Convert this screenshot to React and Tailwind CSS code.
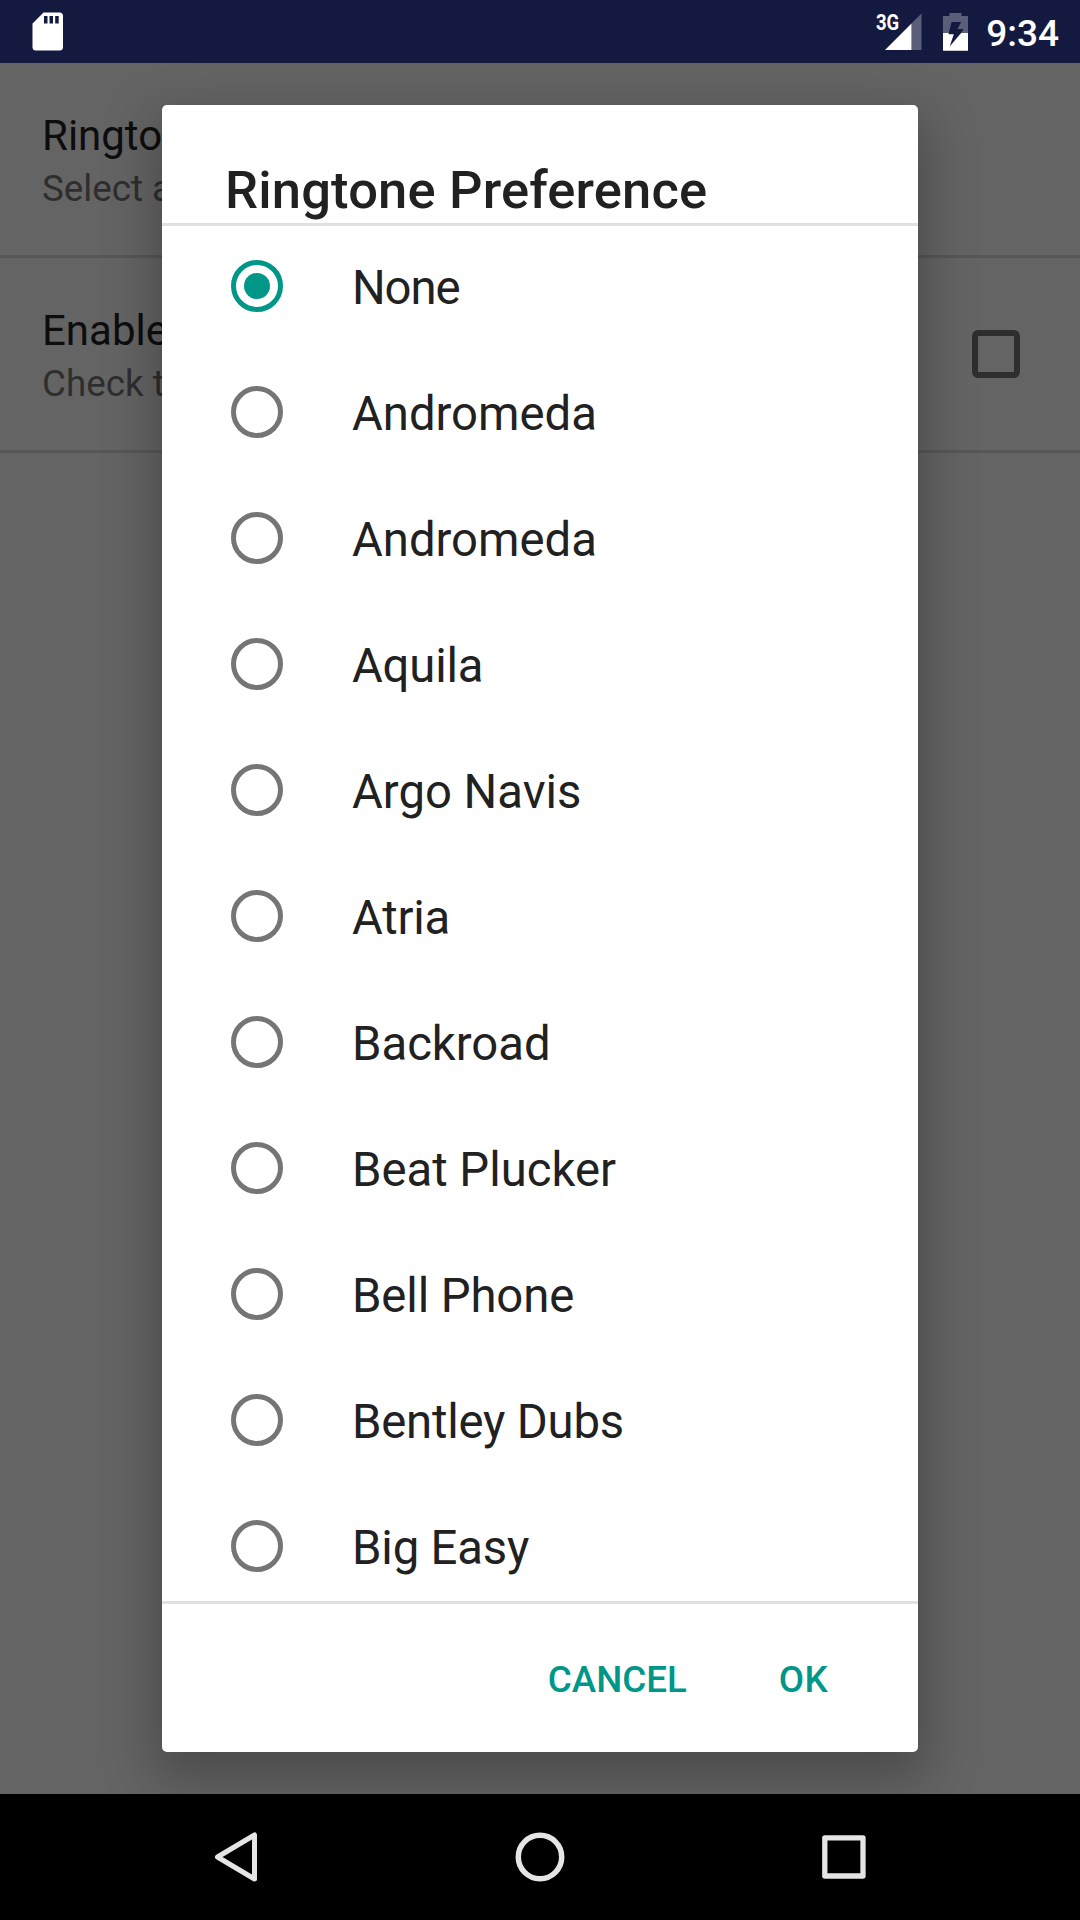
const RINGTONES = [
  { name: 'None', tracking: 'tracking-[-1.1px]' },
  { name: 'Andromeda', tracking: 'tracking-normal' },
  { name: 'Andromeda', tracking: 'tracking-normal' },
  { name: 'Aquila', tracking: 'tracking-[-0.2px]' },
  { name: 'Argo Navis', tracking: 'tracking-normal' },
  { name: 'Atria', tracking: 'tracking-[-0.2px]' },
  { name: 'Backroad', tracking: 'tracking-normal' },
  { name: 'Beat Plucker', tracking: 'tracking-normal' },
  { name: 'Bell Phone', tracking: 'tracking-[-0.1px]' },
  { name: 'Bentley Dubs', tracking: 'tracking-[-0.2px]' },
  { name: 'Big Easy', tracking: 'tracking-[-0.15px]' },
];

function StatusBar() {
  return (
    <header className="relative z-20 flex h-[63px] shrink-0 items-center justify-between bg-[#141940] pl-[32px] pr-[21px] text-white">
      <svg width="32" height="39" viewBox="0 0 32 39" className="block">
        <path fill="#fff" fillRule="evenodd" d="M11.5 0.5H27.5Q31 0.5 31 4V35Q31 38.5 27.5 38.5H4Q.5 38.5 .5 35V11.5ZM12 4V11.5H15.5V4ZM17.5 4V11.5H21V4ZM23.2 4V11.5H26.7V4Z" />
      </svg>
      <div className="flex items-center">
        <div className="relative h-[38px] w-[46px]">
          <span className="absolute left-0 top-0 origin-left scale-x-[0.86] text-[21.5px] font-bold leading-[20px]">3G</span>
          <svg width="46" height="38" viewBox="0 0 46 38" className="block">
            <path fill="#fff" fillOpacity=".3" d="M35.5 10.5V37H45.5V0.5Z" />
            <path fill="#fff" d="M9 37L35.5 10.5V37Z" />
          </svg>
        </div>
        <svg width="25" height="38" viewBox="0 0 25 38" className="ml-[21px] block">
          <path fill="#fff" fillOpacity=".3" fillRule="evenodd" d="M6.5 0H18.5V3H25V20H18.1L20.5 16H14.4L18.2 9H8.5L5.8 20H0V3H6.5Z" />
          <path fill="#fff" d="M0 20H5.8L5.5 21.3H10.8L6.7 33.5L18.1 20H25V37.7H0Z" />
        </svg>
        <span className="ml-[18px] pt-[4px] text-[37px] font-medium leading-[44px]">9:34</span>
      </div>
    </header>
  );
}

function Preference({ title, summary, children }) {
  return (
    <div className="flex h-[195px] items-center justify-between border-b-[3px] border-[#575757] pl-[42px] pr-[60px]">
      <div className="pt-[4px]">
        <div className="text-[42px] leading-[56px] text-[#0d0d0d]">{title}</div>
        <div className="text-[36.75px] leading-[50px] text-[#2e2e2e]">{summary}</div>
      </div>
      {children}
    </div>
  );
}

function Radio({ checked }) {
  return checked ? (
    <span className="flex size-[52px] items-center justify-center rounded-full border-[5px] border-[#009688]">
      <span className="size-[26px] rounded-full bg-[#009688]" />
    </span>
  ) : (
    <span className="size-[52px] rounded-full border-[5px] border-[#757575]" />
  );
}

function RingtoneDialog() {
  return (
    <section className="absolute left-[162px] top-[105px] z-10 flex h-[1647px] w-[756px] flex-col rounded-[5px] bg-white text-[#212121] shadow-[0_20px_52px_8px_rgba(0,0,0,0.26)]">
      <h1 className="h-[121px] shrink-0 border-b-[3px] border-[#e0e0e0] pl-[63px] pt-[54px] text-[52.5px] font-medium leading-[62px] tracking-[0.17px]">
        Ringtone Preference
      </h1>
      <ul className="h-[1375px] shrink-0 overflow-hidden">
        {RINGTONES.map(({ name, tracking }, i) => (
          <li key={i} className="flex h-[126px] items-center pl-[69px] first:-mt-[3px]">
            <Radio checked={i === 0} />
            <span className={`ml-[69px] pt-[4px] text-[47.25px] leading-[56px] ${tracking}`}>{name}</span>
          </li>
        ))}
      </ul>
      <div className="flex grow items-center justify-end border-t-[3px] border-[#e0e0e0] pr-[90px] pt-[4px] text-[36.75px] font-medium text-[#009688]">
        <button className="leading-[44px]">CANCEL</button>
        <button className="ml-[92px] leading-[44px] tracking-[0.3px]">OK</button>
      </div>
    </section>
  );
}

function NavigationBar() {
  return (
    <nav className="relative z-20 flex h-[126px] shrink-0 items-center justify-between bg-black px-[212px]">
      <svg width="50" height="54" viewBox="0 0 50 54" fill="none" stroke="#e5e5e5" strokeWidth="5" strokeLinejoin="round">
        <path d="M42.5 5V49L5.5 27Z" />
      </svg>
      <svg width="50" height="50" viewBox="0 0 50 50" fill="none" stroke="#e5e5e5" strokeWidth="5.5">
        <circle cx="25" cy="25" r="21.7" />
      </svg>
      <svg width="50" height="50" viewBox="0 0 50 50" fill="none" stroke="#e5e5e5" strokeWidth="5.3" strokeLinejoin="round">
        <path d="M6.8 5.8H45V44H6.8Z" />
      </svg>
    </nav>
  );
}

export default function App() {
  return (
    <div className="relative flex h-[1920px] w-[1080px] flex-col overflow-hidden bg-[#646464] font-['Roboto',sans-serif]">
      <StatusBar />
      <main className="grow">
        <Preference title="Ringtone" summary="Select a" />
        <Preference title="Enable" summary="Check t">
          <span className="size-[48px] rounded-[6px] border-[6px] border-[#2e2e2e]" />
        </Preference>
      </main>
      <RingtoneDialog />
      <NavigationBar />
    </div>
  );
}
